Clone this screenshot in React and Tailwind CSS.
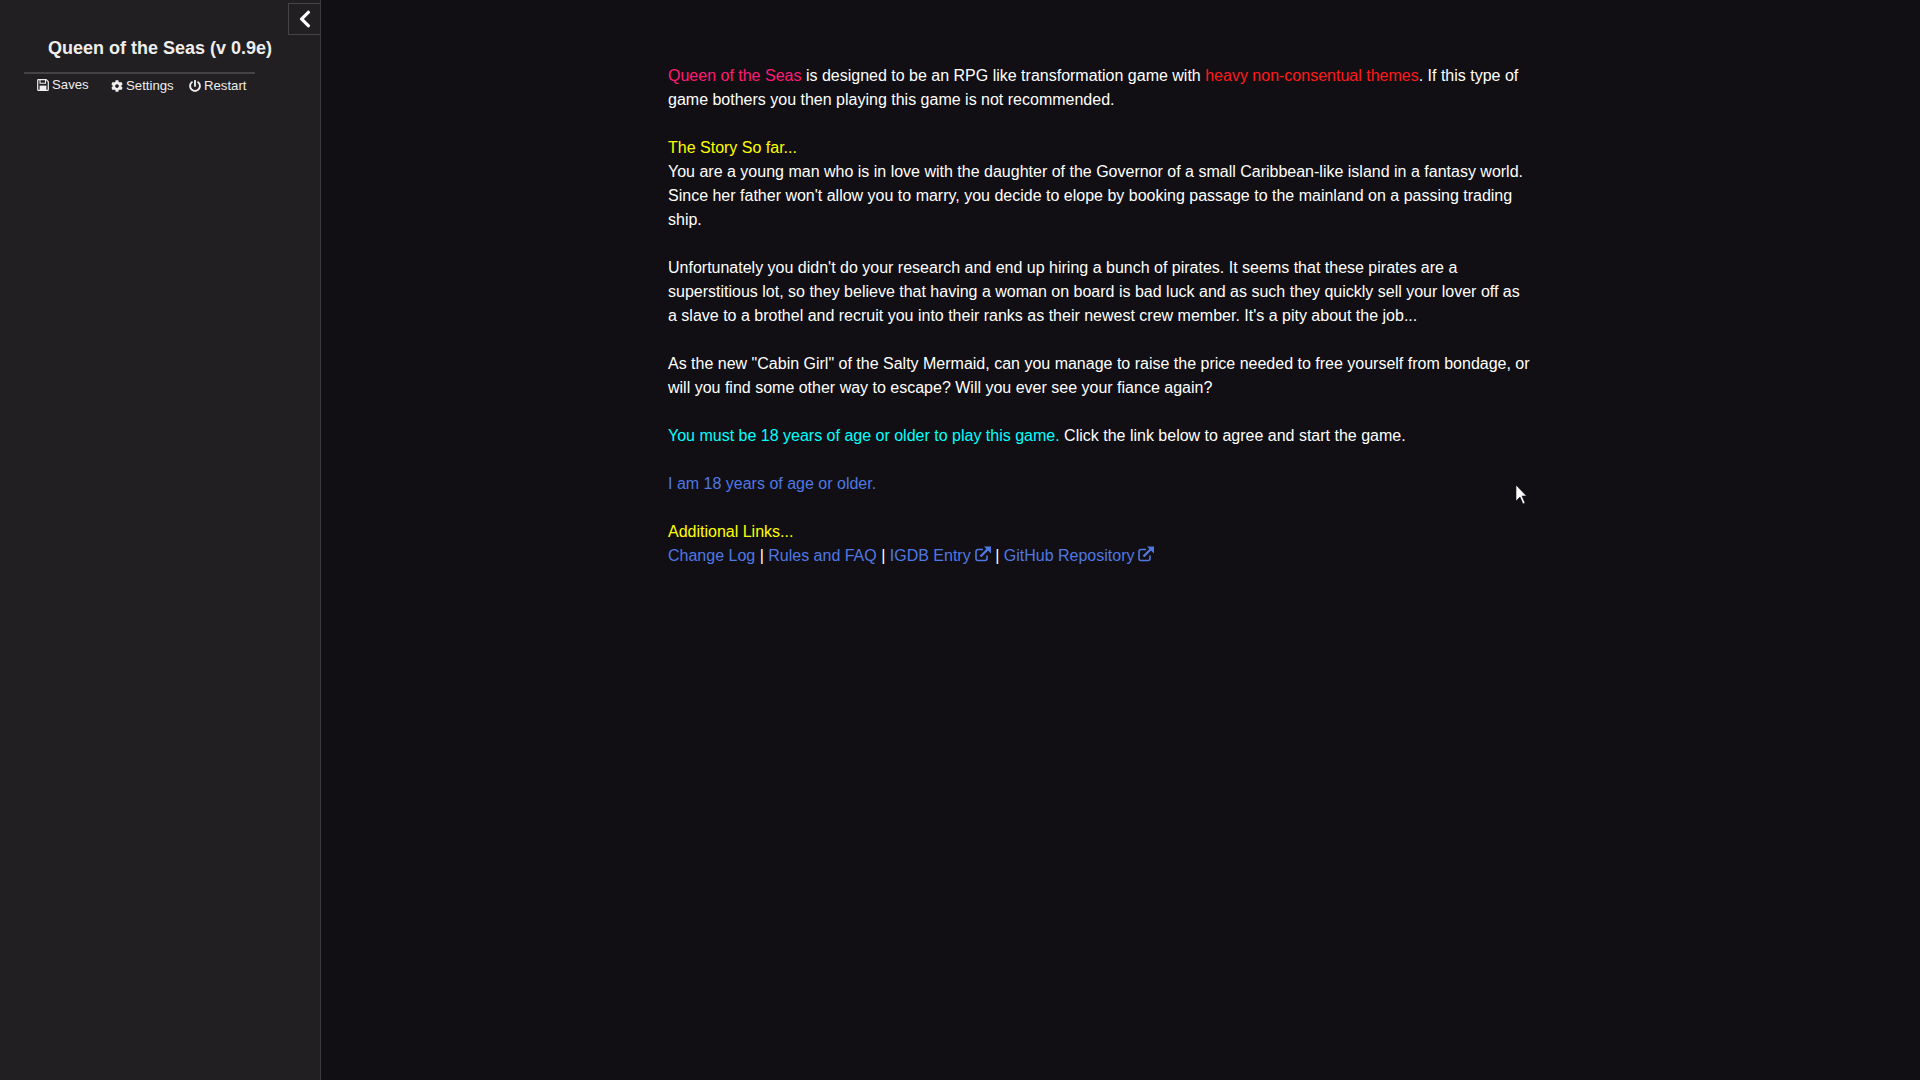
import React from 'react';
import { FaCog, FaChevronLeft, FaPowerOff } from 'react-icons/fa';

const ExternalIcon = () => (
  <svg viewBox="0 0 16 16" className="inline-block w-[16px] h-[16px] ml-[4px] align-[-1px]" fill="none" stroke="currentColor">
    <path d="M12 9.500v3a2 2 0 0 1-2 2H3a2 2 0 0 1-2-2v-7a2 2 0 0 1 2-2h5" strokeWidth="1.600" />
    <path d="M5.500 10.500 13 3" strokeWidth="2.400" />
    <path d="M9 0.500h7v7z" fill="currentColor" stroke="none" />
  </svg>
);

const SaveIcon = () => (
  <svg viewBox="0 0 12 12" className="w-[12px] h-[12px]" fill="none" stroke="currentColor">
    <path d="M0.700 1.200a.5.5 0 0 1 .5-.5h8l2.100 2.100v8a.5.5 0 0 1-.5.5h-9.600a.5.5 0 0 1-.5-.5z" strokeWidth="1.200" />
    <path d="M3 1v3.300h5.500V1" strokeWidth="1.100" />
    <path d="M2.600 6.600h6.800v4.700H2.600z" fill="currentColor" stroke="none" />
  </svg>
);

const Cursor = () => (
  <svg viewBox="0 0 12 20" className="absolute left-[1515px] top-[485px] w-[12px] h-[20px]">
    <path d="M1 0v16l4-4 3 7 2-1-3-7h4.500z" fill="#fff" stroke="#111" strokeWidth="0.600" />
  </svg>
);

const Link = ({ children }) => <a className="text-[#5078e2]">{children}</a>;

export default function App() {
  return (
    <div className="relative flex min-h-[1080px] bg-[#110f13] text-white font-['Liberation_Sans',Arial,sans-serif] overflow-hidden">
      <aside className="relative w-[321px] h-[1080px] shrink-0 bg-[#211f22] border-r border-[#3c3b3e] text-[#eee]">
        <button className="absolute top-[3px] right-0 w-[32px] h-[32px] border border-r-0 border-[#444] flex items-center justify-center text-white">
          <FaChevronLeft size={20} />
        </button>
        <h1 className="pt-[37px] text-center text-[18px] leading-[22px] font-bold">Queen of the Seas (v 0.9e)</h1>
        <div className="ml-[24px] w-[231px] mt-[13px] border-t-2 border-[#444]" />
        <nav className="flex pl-[37px] pt-[2px] text-[13.2px] leading-[20px]">
          <span className="flex items-center gap-[3px] -mt-[2px] w-[74px]">
            <SaveIcon />
            Saves
          </span>
          <span className="flex items-center gap-[3px] w-[78px]">
            <FaCog size={12} />
            Settings
          </span>
          <span className="flex items-center gap-[3px]">
            <FaPowerOff size={12} />
            Restart
          </span>
        </nav>
      </aside>

      <main className="pl-[347px] pt-[64px] text-[16px] leading-[24px]">
        <div className="w-[864px]">
          <p className="mb-[24px]">
            <span className="text-[#ff1a75]">Queen of the Seas</span> is designed to be an RPG like transformation game with{' '}
            <span className="text-[#ff1a1a]">heavy non-consentual themes</span>. If this type of game bothers you then playing this game is not recommended.
          </p>
          <p className="text-[#ffff00]">The Story So far...</p>
          <p className="mb-[24px]">
            You are a young man who is in love with the daughter of the Governor of a small Caribbean-like island in a fantasy world. Since her father won't allow you to marry, you decide to elope by booking passage to the mainland on a passing trading ship.
          </p>
          <p className="mb-[24px]">
            Unfortunately you didn't do your research and end up hiring a bunch of pirates. It seems that these pirates are a superstitious lot, so they believe that having a woman on board is bad luck and as such they quickly sell your lover off as a slave to a brothel and recruit you into their ranks as their newest crew member. It's a pity about the job...
          </p>
          <p className="mb-[24px]">
            As the new "Cabin Girl" of the Salty Mermaid, can you manage to raise the price needed to free yourself from bondage, or will you find some other way to escape? Will you ever see your fiance again?
          </p>
          <p className="mb-[24px]">
            <span className="text-[#00ffff]">You must be 18 years of age or older to play this game.</span> Click the link below to agree and start the game.
          </p>
          <p className="mb-[24px]">
            <Link>I am 18 years of age or older.</Link>
          </p>
          <p className="text-[#ffff00]">Additional Links...</p>
          <p>
            <Link>Change Log</Link> | <Link>Rules and FAQ</Link> | <Link>IGDB Entry<ExternalIcon /></Link> | <Link>GitHub Repository<ExternalIcon /></Link>
          </p>
        </div>
      </main>
      <Cursor />
    </div>
  );
}
